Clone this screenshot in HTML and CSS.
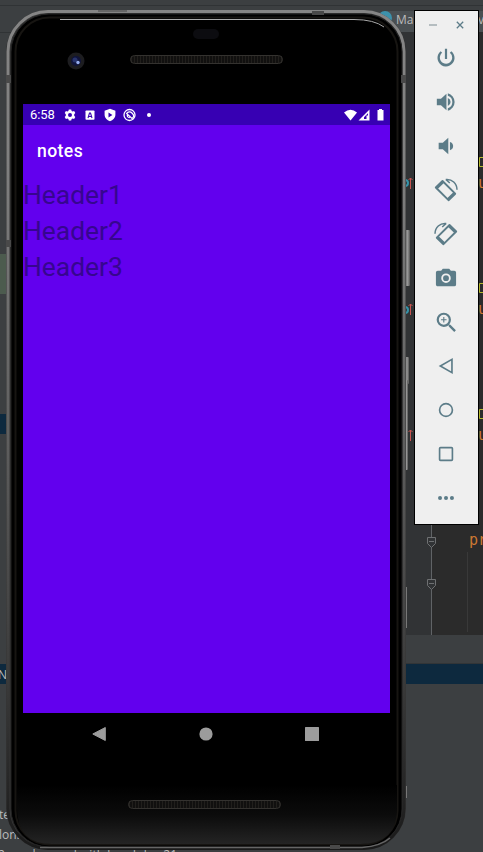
FILE: index.html
```html
<!DOCTYPE html>
<html lang="en">
<head>
<meta charset="utf-8">
<title>notes</title>
<link rel="stylesheet" href="styles.css">
</head>
<body>
<main class="desktop">
  <svg class="ide" width="483" height="852" viewBox="0 0 483 852">
    <rect width="483" height="852" fill="#3c3f41"/>
    <path d="M0 5.5H483M0 32.5H20" stroke="#303335"/>
    <rect y="254" width="8" height="40" fill="#4c5b4e"/>
    <rect y="414" width="8" height="20" fill="#0d293e"/>
    <rect x="385" y="11" width="98" height="21" fill="#4a4f52"/>
    <circle cx="385" cy="18" r="7" fill="#3c91ab"/>
    <rect x="400" y="32" width="32" height="603" fill="#313335"/>
    <rect x="432" y="32" width="51" height="603" fill="#2b2b2b"/>
    <path d="M431.500 520V635" stroke="#606366"/>
    <path d="M467.500 552V632" stroke="#393939"/>
    <g fill="#313335" stroke="#6e7072">
      <path d="M427.500 537.500h8v6l-4 4-4-4zM427.500 579.500h8v6l-4 4-4-4z"/>
      <path d="M429 541.500h5M429 583.500h5"/>
    </g>
    <g fill="none" stroke="#3592a8" stroke-width="2"><circle cx="405" cy="183" r="3"/><circle cx="405" cy="310" r="3"/></g>
    <g fill="none" stroke="#c75450"><path d="M410.500 189V178M408.500 180l2-2 2 2M410.500 315V304M408.500 306l2-2 2 2M410.500 441V430M408.500 432l2-2 2 2"/></g>
    <g fill="none" stroke="#b5b82c"><path d="M479.500 157.500h6v9h-6zM479.500 283.500h6v9h-6zM479.500 409.500h6v9h-6z"/></g>
    <rect y="635" width="483" height="217" fill="#3c3f41"/>
    <path d="M400 663.500H483" stroke="#323537"/>
    <rect y="664" width="483" height="20" fill="#0d293e"/>
    <g class="ide-label">
      <text x="396" y="24">Ma</text><text x="478" y="24">va</text>
      <text x="-2" y="679">N</text><text x="-1" y="819">te</text><text x="-1" y="839">lon.</text>
      <text x="-2" y="859" textLength="179">2 ms dropped with lace Inke: 21</text>
    </g>
    <g class="ide-code">
      <text x="478" y="188">u</text><text x="478" y="314">u</text><text x="478" y="440">u</text><text x="469" y="545">pr</text>
    </g>
  </svg>

  <section class="phone">
    <svg class="shell" width="408" height="844" viewBox="4 8 408 844">
      <defs>
        <linearGradient id="rim" x1="0" y1="0" x2="0" y2="1">
          <stop offset="0" stop-color="#858585"/><stop offset=".18" stop-color="#808080"/>
          <stop offset=".5" stop-color="#606060"/><stop offset=".8" stop-color="#3a3a3a"/><stop offset="1" stop-color="#1a1a1a"/>
        </linearGradient>
        <linearGradient id="chin" x1="0" y1="0" x2="0" y2="1">
          <stop offset="0" stop-color="#000"/><stop offset=".5" stop-color="#0b0b0b"/><stop offset="1" stop-color="#242424"/>
        </linearGradient>
        <linearGradient id="key" x1="0" y1="0" x2="1" y2="0">
          <stop offset="0" stop-color="#444"/><stop offset=".6" stop-color="#999"/><stop offset="1" stop-color="#555"/>
        </linearGradient>
      </defs>
      <rect x="404" y="230" width="6" height="56" rx="1" fill="url(#key)"/>
      <rect x="404" y="357" width="5" height="27" rx="1" fill="url(#key)"/>
      <rect x="404" y="380" width="4" height="90" rx="1" fill="url(#key)"/>
      <path d="M406.500 587V628M406.500 786V798" stroke="#777"/>
      <rect x="6" y="10" width="400" height="840" rx="42" fill="#343434"/>
      <rect x="8" y="11.500" width="396" height="837" rx="40" fill="none" stroke="url(#rim)" stroke-width="3"/>
      <rect x="11" y="14" width="391" height="833" rx="38" fill="#000" stroke="#222"/>
      <rect x="15.500" y="17.500" width="382" height="827" rx="34" fill="none" stroke="#171512" stroke-width="2"/>
      <path d="M17 785H397V808Q397 844 360 844H52Q17 844 17 808Z" fill="url(#chin)"/>
      <path d="M60 19.500H354Q374 19.500 384 27" fill="none" stroke="#aaa"/>
      <path d="M40 847.500H362Q381 846 390 838" fill="none" stroke="#666" stroke-width="1.500"/>
      <path d="M6 75h5v8H6zM6 240h5v7H6zM401 75h5v8h-5zM312 11h12v4h-12zM98 10.500h29v1H98zM330 845h10v4h-10z" fill="#494949"/>
    </svg>

    <div class="bezel bezel-top">
      <span class="sensor"></span>
      <svg class="camera" width="18" height="18" viewBox="0 0 18 18"><circle cx="9" cy="9" r="8.500" fill="#1d1d20"/><circle cx="9" cy="9" r="5" fill="#10143a"/><circle cx="8" cy="8" r="2.500" fill="#28346d"/><circle cx="11" cy="10.500" r="1.700" fill="#96aff0"/></svg>
      <span class="speaker"></span>
    </div>

    <div class="screen">
      <header class="status">
        <span class="clock">6:58</span>
        <svg class="status-icons" width="84" height="14" viewBox="0 0 84 14" fill="#fff">
          <path fill-rule="evenodd" d="M5.800 1.500h2.400l.4 1.600 1 .5 1.500-.5 1.200 2-1.100 1.100v1.600l1.100 1.100-1.200 2-1.500-.5-1 .5-.4 1.600H5.800l-.4-1.600-1-.5-1.500.5-1.200-2 1.100-1.100V6.200L1.700 5.100l1.200-2 1.500.5 1-.5zM7 5a2 2 0 1 0 0 4 2 2 0 0 0 0-4z"/>
          <rect x="22.500" y="2.500" width="9" height="9.300" rx=".8"/>
          <path d="M25 10l1.500-5h1l1.500 5M25.800 8.500h2.400" fill="none" stroke="#3700b3" stroke-width="1.100"/>
          <path fill-rule="evenodd" d="M47 .8l5.400 2v4c0 3-2.400 5.400-5.400 6.400-3-1-5.400-3.400-5.400-6.400v-4zM45.500 4.500v5l3.900-2.500z"/>
          <g fill="none" stroke="#fff"><circle cx="66.500" cy="7" r="5.500" stroke-width="1.300"/><path d="M63.200 5.800q3-3.400 6 -.6t-.2 5.200l-4.600-4.200q-.8 3.400 2.400 3.400" stroke-width="1.200"/></g>
        </svg>
        <span class="dot"></span>
        <svg class="signal" width="42" height="14" viewBox="0 0 42 14" fill="#fff">
          <path d="M0 4.500Q6.500-1.200 13 4.500L6.500 12.500z"/>
          <path fill-rule="evenodd" d="M25.500 1.500v11h-11zM24 5.300l-4 4V11h2.500V7.500H24z"/>
          <path d="M33.500 2h1.500V1h3v1h1.500v10.500h-6V2z"/>
        </svg>
      </header>
      <h1 class="appbar">notes</h1>
      <ul class="notes"><li>Header1</li><li>Header2</li><li>Header3</li></ul>
    </div>

    <nav class="navbar">
      <svg width="14" height="16" viewBox="0 0 14 16"><path d="M13.300 1.500v13L.8 8z" fill="#9c9c9c" stroke="#9c9c9c" stroke-linejoin="round"/></svg>
      <svg width="14" height="14" viewBox="0 0 14 14"><circle cx="7" cy="7" r="6.600" fill="#9c9c9c"/></svg>
      <svg width="14" height="14" viewBox="0 0 14 14"><rect width="14" height="14" rx=".5" fill="#9c9c9c"/></svg>
    </nav>
    <div class="bezel bezel-bottom"><span class="speaker"></span></div>
  </section>

  <aside class="tools">
    <div class="window-buttons">
      <svg width="8" height="8" viewBox="0 0 8 8"><path d="M0 4h8" stroke="#a2adb0" stroke-width="1.500"/></svg>
      <svg width="8" height="8" viewBox="0 0 8 8"><path d="M.8.8l6.400 6.400M7.200.8L.8 7.200" stroke="#5c7c88" stroke-width="1.300"/></svg>
    </div>
    <svg class="tool" viewBox="0 0 24 24"><path d="M13.200 2h-2.400v11h2.400V2zm4.630 2.670l-1.620 1.620A6.700 6.700 0 0 1 18.700 12a6.700 6.700 0 1 1-10.900-5.700L6.170 4.670A9.300 9.300 0 0 0 2.700 12a9.300 9.300 0 1 0 15.130-7.330z"/></svg>
    <svg class="tool" viewBox="0 0 24 24"><path d="M2 8.500v7h4.500l6 5.500V3l-6 5.500H2zm15 3.500A4.800 4.800 0 0 0 14 7.600v8.800A4.800 4.800 0 0 0 17 12zM14 2.500v2.600a7.300 7.300 0 0 1 0 13.800v2.600a9.800 9.800 0 0 0 0-19z"/></svg>
    <svg class="tool" viewBox="0 0 24 24"><path d="M19.800 12A4.800 4.800 0 0 0 16.300 7.500v9A4.800 4.800 0 0 0 19.800 12zM4 8.500v7h4.500l6 5.500V3l-6 5.500H4z"/></svg>
    <svg class="tool rotate" viewBox="0 0 24 24"><g fill="none" stroke="#5c7c88"><path d="M8.500 3L1.800 9.500 14.500 22.200 21.200 15.700z" stroke-width="1.900" stroke-linejoin="round"/><path d="M2.500 10.200L9.200 3.700M13.800 21.500L20.500 15" stroke-width="2.600"/><path d="M11.800 1.500C18 .8 23 5.500 23 11.800M11.800 1.500l4 3.500" stroke-width="1.500"/></g></svg>
    <svg class="tool rotate" viewBox="0 0 24 24"><g transform="matrix(-1 0 0 1 24 0)" fill="none" stroke="#5c7c88"><path d="M8.500 3L1.800 9.500 14.500 22.200 21.200 15.700z" stroke-width="1.900" stroke-linejoin="round"/><path d="M2.500 10.200L9.200 3.700M13.800 21.500L20.500 15" stroke-width="2.600"/><path d="M11.800 1.500C18 .8 23 5.500 23 11.800M11.800 1.500l4 3.500" stroke-width="1.500"/></g></svg>
    <svg class="tool" viewBox="0 0 24 24"><path fill-rule="evenodd" d="M8.500 2L6.700 4H3a2 2 0 0 0-2 2v13c0 1.100.9 2 2 2h18a2 2 0 0 0 2-2V6a2 2 0 0 0-2-2h-3.700L15.500 2h-7zm3.500 5a5.200 5.200 0 1 1 0 10.400A5.200 5.200 0 0 1 12 7zm0 2a3.200 3.200 0 1 0 0 6.400A3.200 3.200 0 0 0 12 9z"/></svg>
    <svg class="tool" viewBox="1.500 1.500 20 20"><path d="M15.500 14h-.79l-.28-.27A6.470 6.470 0 0 0 16 9.500 6.500 6.500 0 1 0 9.500 16c1.610 0 3.090-.59 4.230-1.570l.27.280v.79l5 4.990L20.490 19l-4.990-5zm-6 0a4.500 4.500 0 1 1 0-9 4.500 4.500 0 0 1 0 9zM12 10h-2v2H9v-2H7V9h2V7h1v2h2v1z"/></svg>
    <svg class="tool outline" viewBox="0 0 24 24"><path d="M18.500 4.800v14.500L5.800 12z"/></svg>
    <svg class="tool outline" viewBox="0 0 24 24"><circle cx="12" cy="12" r="7"/></svg>
    <svg class="tool outline" viewBox="0 0 24 24"><rect x="5" y="5" width="14" height="14" rx="1"/></svg>
    <svg class="tool" viewBox="0 0 24 24"><circle cx="5.500" cy="12" r="2.200"/><circle cx="12" cy="12" r="2.200"/><circle cx="18.500" cy="12" r="2.200"/></svg>
  </aside>
</main>
</body>
</html>
```
FILE: styles.css
```css
* { box-sizing: border-box; }
body { margin: 0; background: #3c3f41; font-family: Roboto, sans-serif; }
svg { display: block; flex: none; }
.desktop { position: relative; width: 483px; height: 852px; overflow: hidden; }
.ide { position: absolute; inset: 0; }
.ide-label { font: 12px "Open Sans", sans-serif; fill: #bbb; }
.ide-code { font: 15px "DejaVu Sans Mono", monospace; fill: #cc7832; }

.phone { position: absolute; left: 6px; top: 10px; width: 400px; height: 840px; display: flex; flex-direction: column; }
.shell { position: absolute; left: -2px; top: -2px; }
.bezel, .screen, .navbar { position: relative; }
.bezel { display: flex; }
.bezel-top { height: 94px; padding: 45px 0 0 124px; }
.speaker {
  width: 153px; height: 9px; border: 1px solid #34322f; border-radius: 5px;
  background: repeating-linear-gradient(90deg, #211f1c 0 1px, #11100f 1px 3px);
}
.sensor { position: absolute; left: 187px; top: 19px; width: 26px; height: 10px; border-radius: 5px; background: #0c0c10; }
.camera { position: absolute; left: 61px; top: 42px; }

.screen { width: 367px; height: 609px; margin-left: 17px; background: #6200ee; }
.status { height: 21px; display: flex; align-items: center; padding: 0 4px 0 7px; background: #3700b3; }
.clock { width: 33px; color: #fff; font-size: 13px; line-height: 21px; letter-spacing: -.1px; }
.dot { width: 4px; height: 4px; border-radius: 50%; background: #fff; }
.signal { margin-left: auto; }
.appbar { height: 52px; margin: 0; padding-left: 14px; color: #fff; font-size: 17.600px; font-weight: 500; line-height: 52px; letter-spacing: .4px; }
.notes { margin: 0; padding: 1px 0 0; list-style: none; color: #36068f; font-size: 26.400px; }
.notes li { height: 36px; line-height: 34px; }

.navbar { display: flex; align-items: center; justify-content: space-between; height: 42px; padding: 0 87px 0 86px; }
.bezel-bottom { padding: 45px 0 0 122px; }

.tools {
  position: absolute; left: 414px; top: 10px; width: 65px; height: 515px;
  display: flex; flex-direction: column; align-items: center; gap: 22px;
  border: 1px solid #000; background: #efefef; padding: 10px 1px 0 0;
}
.window-buttons { display: flex; gap: 19px; height: 8px; margin: 0 0 -4px; }
.tool { width: 22px; height: 22px; fill: #5c7c88; }
.rotate { width: 24px; height: 24px; margin: -1px 0; }
.outline { fill: none; stroke: #5c7c88; stroke-width: 1.800; }
```
